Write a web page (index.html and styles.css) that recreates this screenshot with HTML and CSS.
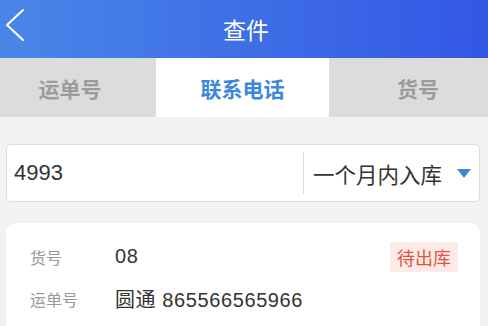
FILE: index.html
```html
<!DOCTYPE html>
<html lang="zh-CN">
<head>
    <meta charset="UTF-8">
    <meta name="viewport" content="width=device-width, initial-scale=1.0">
    <title>查件</title>
    <link rel="stylesheet" href="styles.css">
</head>
<body>
    <div class="header">
        <span class="back">
            <svg width="20" height="34" viewBox="0 0 20 34">
                <polyline points="18,2 2,17 18,32" fill="none" stroke="#fff" stroke-width="2" stroke-linecap="round" stroke-linejoin="round"/>
            </svg>
        </span>
        <h1 class="title">查件</h1>
    </div>
    <div class="tabs">
        <div class="tab tab-first">运单号</div>
        <div class="tab active">联系电话</div>
        <div class="tab tab-last">货号</div>
    </div>
    <div class="search">
        <div class="search-input">4993</div>
        <div class="search-range">
            一个月内入库
            <span class="arrow"></span>
        </div>
    </div>
    <div class="card">
        <div class="row">
            <span class="label">货号</span>
            <span class="value">08</span>
            <span class="badge">待出库</span>
        </div>
        <div class="row">
            <span class="label">运单号</span>
            <span class="value">圆通 865566565966</span>
        </div>
    </div>
</body>
</html>
```

FILE: styles.css
```css
body {
    margin: 0;
    background-color: #f1f2f4;
    font-family: "Liberation Sans", "Noto Sans CJK SC", sans-serif;
    color: #333;
}
.header {
    height: 58px;
    display: flex;
    align-items: center;
    justify-content: center;
    position: relative;
    background: linear-gradient(to right, #4a86e8, #3357e5);
}
.back {
    position: absolute;
    left: 5px;
    top: 8px;
}
.title {
    margin: 0;
    color: #fff;
    font-size: 23px;
    font-weight: normal;
    padding-left: 4px;
}
.tabs {
    display: grid;
    grid-template-columns: 156px 173px 1fr;
    height: 59px;
    background-color: #dcdcdc;
}
.tab {
    display: flex;
    align-items: center;
    justify-content: center;
    font-size: 21px;
    font-weight: bold;
    color: #9b9b9b;
}
.tab-first {
    padding-right: 16px;
}
.tab-last {
    padding-left: 19px;
}
.tab.active {
    background-color: #fff;
    color: #3a87dc;
}
.search {
    display: flex;
    align-items: center;
    margin: 27px 8px 0 6px;
    height: 56px;
    background-color: #fff;
    border: 1px solid #dcdcdc;
    border-radius: 5px;
}
.search-input {
    flex: 1;
    padding-left: 7px;
    font-size: 22px;
    color: #333;
}
.search-range {
    display: flex;
    align-items: center;
    height: 42px;
    border-left: 1px solid #dedede;
    padding-left: 9px;
    padding-right: 8px;
    font-size: 21.5px;
    color: #333;
}
.arrow {
    margin-left: 15px;
    width: 0;
    height: 0;
    border-left: 7px solid transparent;
    border-right: 7px solid transparent;
    border-top: 9px solid #3a87dc;
}
.card {
    margin: 21px 8px 0 6px;
    padding: 21px 22px 10px 24px;
    background-color: #fff;
    border-radius: 10px;
}
.row {
    display: flex;
    align-items: center;
    height: 25px;
    margin-bottom: 17px;
}
.label {
    width: 85px;
    font-size: 16px;
    color: #999;
}
.value {
    flex: 1;
    font-size: 20px;
    letter-spacing: 0.6px;
    color: #333;
}
.badge {
    padding: 2px 7px;
    font-size: 18px;
    color: #e4533f;
    background-color: #fdebe7;
}
```
